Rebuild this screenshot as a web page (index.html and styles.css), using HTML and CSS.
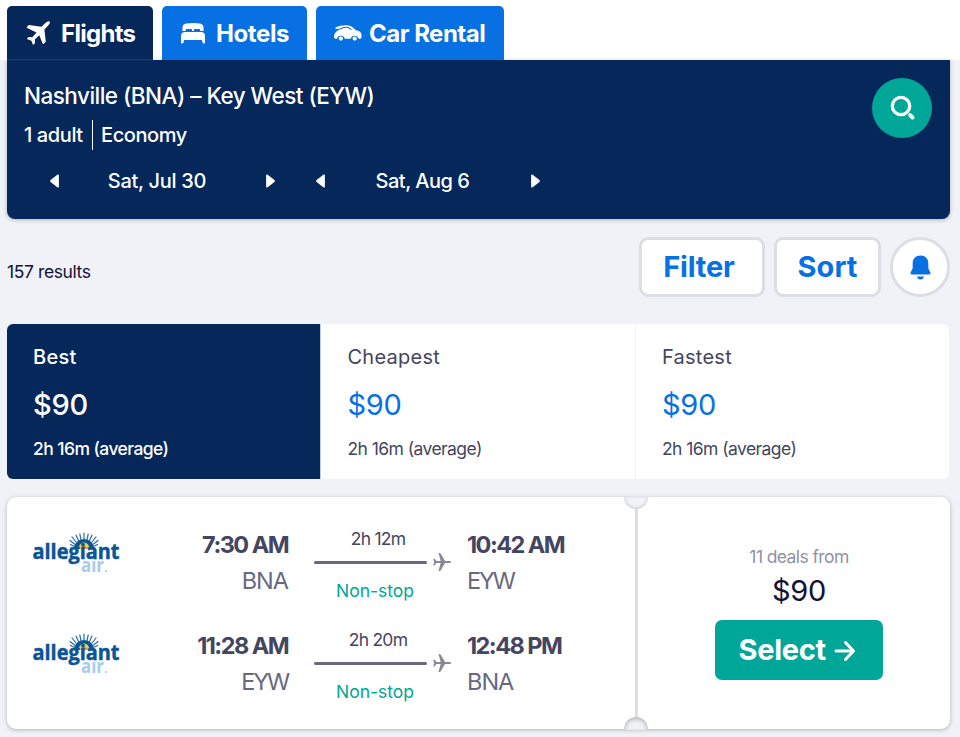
FILE: index.html
```html
<!DOCTYPE html>
<html lang="en">
<head>
    <meta charset="UTF-8">
    <meta name="viewport" content="width=device-width, initial-scale=1.0">
    <title>Nashville to Key West flights</title>
    <link rel="stylesheet" href="styles.css">
</head>
<body>
    <!-- Shared icons -->
    <svg class="defs" width="0" height="0">
        <symbol id="plane" viewBox="0 0 18 18">
            <path d="M17 7.9H12L7.6.6C7.4.2 7 0 6.6 0H5.5l2.2 7.9H3.4L1.8 5.7H.2L1.2 9l-1 3.3h1.6l1.6-2.2h4.3L5.5 18h1.1c.4 0 .8-.2 1-.6l4.4-7.3h5c1.3 0 1.3-2.2 0-2.2z"/>
        </symbol>
        <symbol id="left" viewBox="0 0 9 14">
            <path d="M8.900 1.600v10.800c0 1-.8 1.400-1.600.8L.6 8C0 7.500 0 6.500.6 6L7.300.8c.8-.6 1.600-.2 1.600.8z"/>
        </symbol>
        <symbol id="right" viewBox="0 0 9 14">
            <path d="M.1 1.600v10.800c0 1 .8 1.400 1.600.8L8.400 8c.6-.5.6-1.500 0-2L1.700.8C.9.2.1.6.1 1.600z"/>
        </symbol>
        <symbol id="sun" viewBox="0 0 30 18">
            <path d="M4.500 15l-3-1.500M5.500 13L1 9.500M7 11L3 6M9.500 9.500L7 4M12 8.500L10.800 3M15 8.500V2M18 8.500L19.200 3M20.500 9.500L23 4M23 11l4-5M24.500 13L29 9.500M25.500 15l3-1.500" stroke="#2b6ca5" stroke-width="1.200" stroke-linecap="round"/>
            <path d="M5 17a10 9 0 0 1 20 0z" fill="#0b5596"/>
            <path d="M9.500 18a5.500 6.500 0 0 1 11 0z" fill="#f8d34a"/>
            <path d="M12 18a3 3.500 0 0 1 6 0z" fill="#f08a4b"/>
        </symbol>
    </svg>

    <!-- Tabs -->
    <nav class="tabs">
        <a class="tab active">
            <svg width="24" height="24" viewBox="0 0 24 24"><path d="M23.600.4c.7 1-.1 2.700-1.200 3.800l-4 4.300 1.400 12.200-2 2c-.5.4-1 .3-1.200-.2l-3.300-8.300-4.500 4.200.3 3.600-1.500 1.500c-.3.3-.7.3-.9-.2l-1.300-3.600-3.900-1.500c-.5-.2-.5-.6-.2-.9L2.700 15.900l3.700.3 4.100-4.600L1.100 7.100C.5 6.800.5 6.400.8 6l2-2L15.500 5.800l4.200-4c1.100-1.100 3-2.100 3.900-1.400z"/></svg>
            <span class="t-flights">Flights</span>
        </a>
        <a class="tab">
            <svg width="24" height="22" viewBox="0 0 24 22"><path d="M1.500 9V5.500C1.500 3 3 2 5 1.600 9.500.8 14.500.8 19 1.600c2 .4 3.500 1.400 3.500 3.900V9h-3.200V8.200c0-.8-.5-1.300-1.300-1.300h-3.800c-.8 0-1.300.5-1.300 1.300V9h-1.800V8.200c0-.8-.5-1.300-1.300-1.300H6c-.8 0-1.300.5-1.300 1.300V9z"/><path d="M4 10h16c2.500 0 4 1.500 4 4v6.500c0 .8-.5 1-1 1-1 0-1.300-.5-1.600-1.500l-.5-2H3.100L2.600 20c-.3 1-.6 1.500-1.600 1.500-.5 0-1-.2-1-1V14c0-2.500 1.500-4 4-4z"/></svg>
            <span class="t-hotels">Hotels</span>
        </a>
        <a class="tab">
            <svg width="28" height="16" viewBox="0 0 28 16"><path d="M1.500 2.600C5 .8 8.500.2 12.500.3c4.500.1 7 2.500 9.300 4.900 3.700.5 5.700 2 5.700 4.800v2c0 1-.6 1.800-1.600 1.800h-1.300a4 4 0 0 0-7.800 0h-6a4 4 0 0 0-7.800 0H2C.8 13.800 0 13 0 12c0-3 1.200-5 4-6.500L6.500 3.500C4.800 3.700 3 4 1.500 4.200z"/><path d="M6 4.200C9.500 1.900 14 1.700 17.500 4.600" fill="none" stroke="#0770e3" stroke-width="1.100"/><circle cx="6.900" cy="13.600" r="2.100"/><circle cx="20.700" cy="13.600" r="2.100"/></svg>
            <span class="t-cars">Car Rental</span>
        </a>
    </nav>

    <main>
        <!-- Search summary -->
        <section class="search">
            <div class="search-info">
                <div class="route">Nashville (BNA) – Key West (EYW)</div>
                <div class="details">
                    <span class="adults">1 adult</span>
                    <span class="cabin">Economy</span>
                </div>
                <div class="dates">
                    <div class="date">
                        <svg width="9" height="14"><use href="#left"/></svg>
                        <span class="d-out">Sat, Jul 30</span>
                        <svg width="9" height="14"><use href="#right"/></svg>
                    </div>
                    <div class="date return">
                        <svg width="9" height="14"><use href="#left"/></svg>
                        <span class="d-back">Sat, Aug 6</span>
                        <svg width="9" height="14"><use href="#right"/></svg>
                    </div>
                </div>
            </div>
            <button class="search-btn" aria-label="Search">
                <svg width="26" height="26" viewBox="0 0 26 26" fill="none" stroke="#fff"><circle cx="11" cy="11" r="8.700" stroke-width="3.300"/><path d="M20.200 20.200l2.300 2.300" stroke-width="4" stroke-linecap="round"/></svg>
            </button>
        </section>

        <!-- Results bar -->
        <div class="toolbar">
            <span class="count">157 results</span>
            <button class="outline filter">Filter</button>
            <button class="outline sort">Sort</button>
            <button class="outline bell" aria-label="Price alert">
                <svg width="21" height="25" viewBox="0 0 20 25"><path d="M10 .5c4.800 0 7.800 3.300 7.800 7.500v4.500c0 1.500 1.200 3 1.900 4.500.8 1.800 0 2.500-1.200 2.500h-17c-1.200 0-2-.7-1.200-2.500.7-1.500 1.900-3 1.900-4.500V8C2.200 3.800 5.200.5 10 .5zM6.700 21.500h6.600c0 1.800-1.400 3-3.300 3s-3.300-1.200-3.300-3z"/></svg>
            </button>
        </div>

        <!-- Sort options -->
        <div class="options">
            <div class="option selected">
                <div class="option-name">Best</div>
                <div class="option-price">$90</div>
                <div class="option-time">2h 16m (average)</div>
            </div>
            <div class="option">
                <div class="option-name">Cheapest</div>
                <div class="option-price">$90</div>
                <div class="option-time">2h 16m (average)</div>
            </div>
            <div class="option">
                <div class="option-name">Fastest</div>
                <div class="option-price">$90</div>
                <div class="option-time">2h 16m (average)</div>
            </div>
        </div>

        <!-- Ticket -->
        <article class="ticket">
            <div class="legs">
                <div class="leg">
                    <svg class="logo" width="90" height="44" viewBox="0 0 90 44">
                        <use href="#sun" x="37" width="30" height="18"/>
                        <text class="logo-air" x="49" y="41" textLength="23" lengthAdjust="spacingAndGlyphs">air</text>
                        <text class="logo-name" x="0.5" y="28" textLength="87" lengthAdjust="spacingAndGlyphs">allegiant</text>
                        <circle cx="74" cy="40" r="1.100" fill="#a6cbee"/>
                    </svg>
                    <div class="depart">
                        <div class="time">7:30 AM</div>
                        <div class="code">BNA</div>
                    </div>
                    <div class="path">
                        <div class="duration">2h 12m</div>
                        <div class="line"><i></i><svg width="18" height="18"><use href="#plane"/></svg></div>
                        <div class="stops">Non-stop</div>
                    </div>
                    <div class="arrive">
                        <div class="time">10:42 AM</div>
                        <div class="code wide">EYW</div>
                    </div>
                </div>
                <div class="leg">
                    <svg class="logo" width="90" height="44" viewBox="0 0 90 44">
                        <use href="#sun" x="37" width="30" height="18"/>
                        <text class="logo-air" x="49" y="41" textLength="23" lengthAdjust="spacingAndGlyphs">air</text>
                        <text class="logo-name" x="0.5" y="28" textLength="87" lengthAdjust="spacingAndGlyphs">allegiant</text>
                        <circle cx="74" cy="40" r="1.100" fill="#a6cbee"/>
                    </svg>
                    <div class="depart">
                        <div class="time">11:28 AM</div>
                        <div class="code wide">EYW</div>
                    </div>
                    <div class="path">
                        <div class="duration">2h 20m</div>
                        <div class="line"><i></i><svg width="18" height="18"><use href="#plane"/></svg></div>
                        <div class="stops">Non-stop</div>
                    </div>
                    <div class="arrive">
                        <div class="time">12:48 PM</div>
                        <div class="code">BNA</div>
                    </div>
                </div>
            </div>
            <div class="divider"></div>
            <div class="deal">
                <div class="deal-count">11 deals from</div>
                <div class="deal-price">$90</div>
                <button class="select"><span>Select</span>
                    <svg width="22" height="22" viewBox="0 0 22 22" fill="none" stroke="#fff" stroke-width="3" stroke-linecap="round" stroke-linejoin="round"><path d="M2 11h17M11.500 2.500l8 8.500-8 8.500"/></svg>
                </button>
            </div>
        </article>
    </main>
</body>
</html>
```
FILE: styles.css
```css
* {
    box-sizing: border-box;
}
body {
    margin: 0;
    height: 737px;
    overflow: hidden;
    background: #f1f2f8;
    color: #444560;
    font-family: Inter, "Liberation Sans", sans-serif;
}
button {
    font-family: inherit;
    cursor: pointer;
}
.defs {
    position: absolute;
}
.tabs {
    display: flex;
    gap: 9px;
    height: 60px;
    padding: 6px 7px 0;
    background: #fff;
}
.tab {
    display: flex;
    align-items: center;
    width: 146px;
    height: 54px;
    padding-left: 19px;
    border-radius: 5px 5px 0 0;
    background: #0770e3;
    color: #fff;
    fill: #fff;
    font-size: 24px;
    font-weight: 700;
    white-space: nowrap;
}
.tab:nth-child(2) {
    width: 145px;
}
.tab:nth-child(3) {
    width: 188px;
    padding-left: 18px;
}
.tab.active {
    background: #05275a;
    box-shadow: inset 0 -1px 0 #1f3d6b;
}
.tab span {
    margin-left: 11px;
}
.tab .t-flights {
    letter-spacing: -0.7px;
}
.tab .t-hotels {
    letter-spacing: -0.4px;
}
.tab .t-cars {
    margin-left: 7px;
    letter-spacing: -0.5px;
}
main {
    padding: 0 10px 0 7px;
}
.search {
    display: flex;
    justify-content: space-between;
    height: 159px;
    padding: 18px 18px 0 17px;
    border-radius: 0 0 8px 8px;
    background: #05275a;
    box-shadow: 0 1px 4px rgba(37, 32, 31, 0.3);
    color: #fff;
    fill: #fff;
}
.route {
    height: 36px;
    font-size: 22.5px;
    line-height: 36px;
    font-weight: 500;
    letter-spacing: -0.53px;
    white-space: nowrap;
}
.details {
    display: flex;
    margin-top: 6px;
    font-size: 20px;
    line-height: 30px;
    font-weight: 500;
    letter-spacing: -0.4px;
}
.adults {
    width: 69px;
    border-right: 1px solid #fff;
}
.cabin {
    margin-left: 8px;
}
.dates {
    display: flex;
    gap: 41px;
    margin: 16px 0 0 26px;
}
.date {
    display: flex;
    align-items: center;
    justify-content: space-between;
    width: 225px;
    height: 30px;
    font-size: 20px;
    font-weight: 500;
    letter-spacing: -0.3px;
}
.date span {
    margin-right: 11px;
}
.date.return {
    width: 224px;
    letter-spacing: -0.5px;
}
.search-btn {
    width: 60px;
    height: 60px;
    padding: 3px 0 0 2px;
    border: none;
    border-radius: 50%;
    background: #00a698;
}
.toolbar {
    display: flex;
    align-items: center;
    height: 60px;
    margin-top: 18px;
}
.count {
    flex: 1;
    padding-top: 9px;
    color: #111236;
    font-size: 17.5px;
    letter-spacing: -0.4px;
}
.outline {
    height: 60px;
    margin-left: 9px;
    padding: 0 0 1px;
    border: 3px solid #dddde5;
    border-radius: 9px;
    background: #fff;
    color: #0770e3;
    fill: #0770e3;
    font-size: 29px;
    font-weight: 700;
}
.filter {
    width: 126px;
    padding-right: 6px;
    letter-spacing: -0.2px;
}
.sort {
    width: 107px;
}
.bell {
    width: 60px;
    border-radius: 50%;
}
.bell svg {
    display: block;
    margin: 2px auto 0;
}
.options {
    display: grid;
    grid-template-columns: 314px 315px 313px;
    height: 155px;
    margin-top: 27px;
    border-radius: 6px;
    overflow: hidden;
    width: 942px;
    background: #fff;
}
.option {
    padding: 18px 0 0 26.500px;
    border-right: 1px solid #f1f2f8;
}
.option:last-child {
    padding-left: 26px;
    border-right: none;
}
.option.selected {
    background: #05275a;
    border-right-color: #c5cbda;
    color: #fff;
    padding-left: 26px;
}
.option-name {
    font-size: 20px;
    line-height: 30px;
    letter-spacing: 0.25px;
}
.option-price {
    margin-top: 15px;
    color: #0770e3;
    font-size: 29px;
    line-height: 36px;
    letter-spacing: -0.3px;
}
.option-time {
    margin-top: 13px;
    font-size: 17.5px;
    line-height: 26px;
    letter-spacing: -0.57px;
    white-space: nowrap;
}
.selected .option-name,
.selected .option-price,
.selected .option-time {
    color: #fff;
    font-weight: 500;
}
.ticket {
    position: relative;
    display: flex;
    height: 232px;
    margin-top: 18px;
    border-radius: 9px;
    background: #fff;
    box-shadow: 0 1px 4px rgba(37, 32, 31, 0.3);
}
.legs {
    width: 628px;
    padding-top: 30px;
}
.leg {
    display: flex;
    height: 101px;
}
.logo {
    margin: 4px 0 0 25px;
}
.logo-name {
    fill: #0b5596;
    stroke: #0b5596;
    stroke-width: 0.5px;
    font-family: "Open Sans", sans-serif;
    font-size: 21.5px;
    font-weight: 700;
}
.logo-air {
    fill: #a6cbee;
    font-family: "Open Sans", sans-serif;
    font-size: 20px;
    font-weight: 700;
}
.depart {
    width: 166px;
    margin-right: 1px;
    text-align: right;
}
.time {
    height: 36px;
    font-size: 23.5px;
    line-height: 36px;
    font-weight: 700;
    letter-spacing: -1.55px;
    white-space: nowrap;
}
.code {
    color: #68697f;
    font-size: 23.5px;
    line-height: 36px;
    letter-spacing: -1px;
}
.code.wide {
    letter-spacing: -2.2px;
}
.path {
    width: 138px;
    margin: -1px 0 0 25px;
    font-size: 17.5px;
    line-height: 26px;
}
.duration {
    width: 128px;
    text-align: center;
    letter-spacing: -0.75px;
}
.line {
    display: flex;
    align-items: center;
    height: 24px;
    margin-top: -2px;
    fill: #8b8797;
}
.line i {
    width: 113px;
    height: 3px;
    margin-right: 6px;
    border-radius: 2px;
    background: #68697f;
}
.stops {
    width: 122px;
    margin-top: 4px;
    color: #00a698;
    text-align: center;
}
.arrive {
    margin-left: 15px;
}
/* perforated edge with a notch at each end */
.divider {
    position: relative;
    width: 3px;
    background: #dddde5;
}
.divider::before,
.divider::after {
    content: "";
    position: absolute;
    left: -11px;
    width: 24px;
    height: 12px;
    background: #f1f2f8;
}
.divider::before {
    top: 0;
    border-radius: 0 0 12px 12px;
    box-shadow: inset 0 -1px 3px rgba(37, 32, 31, 0.2);
    clip-path: inset(0);
}
.divider::after {
    bottom: -1px;
    height: 13px;
    border-radius: 12px 12px 0 0;
    box-shadow: inset 0 2px 4px rgba(37, 32, 31, 0.3);
}
.deal {
    flex: 1;
    display: flex;
    flex-direction: column;
    align-items: center;
    padding: 47px 0 0 10px;
}
.deal-count {
    color: #9192a2;
    font-size: 17.5px;
    line-height: 26px;
    letter-spacing: -0.6px;
}
.deal-price {
    margin-top: 3px;
    color: #111236;
    font-size: 29px;
    line-height: 36px;
    letter-spacing: -0.3px;
}
.select {
    display: flex;
    align-items: center;
    width: 168px;
    height: 60px;
    margin-top: 11px;
    padding: 0 0 1px 23.500px;
    border: none;
    border-radius: 7px;
    background: #00a698;
    color: #fff;
    font-size: 29px;
    font-weight: 700;
    letter-spacing: -0.3px;
}
.select svg {
    margin: 2px 0 0 8px;
}
```
